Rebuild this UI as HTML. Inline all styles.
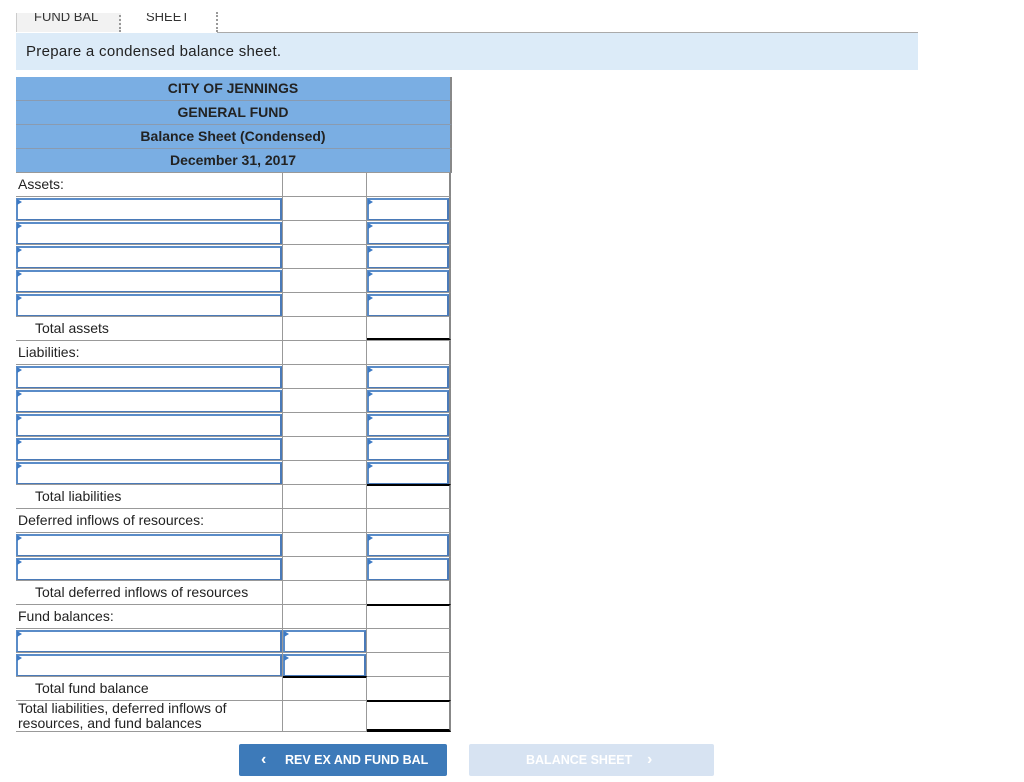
<html><head><style>
body{margin:0;width:1024px;height:782px;background:#fff;font-family:"Liberation Sans",Arial,sans-serif;position:relative;overflow:hidden}
.a{position:absolute}
.hd{position:absolute;left:16px;width:434px;height:23px;background:#7aaee3;border-bottom:1px solid #8a9bb0;font-weight:bold;font-size:14px;color:#222;text-align:center;line-height:23px;border-right:2px solid #888}
.r{position:absolute;left:16px;width:435px;height:24px;display:flex;font-size:14px;color:#222}
.r>div{box-sizing:border-box;height:24px;border-top:1px solid #999;border-right:1px solid #999;position:relative}
.r>div:nth-child(1){width:267px;border-right:1px solid #999}
.r>div:nth-child(2){width:84px}
.r>div:nth-child(3){width:84px;border-right:2px solid #888}
.l{padding:3px 0 0 2px;white-space:nowrap}
.t{padding:3px 0 0 19px}
.i::after{content:"";position:absolute;left:0;top:1px;right:0;bottom:-1px;border:2px solid #5286c4;border-color:#5a8cc8 #4a7ab8 #4a7ab8 #5a8cc8}
.i::before{content:"";position:absolute;left:1px;top:2px;border-left:5px solid #3d7ac4;border-top:3px solid transparent;border-bottom:3px solid transparent;z-index:2}
.bb{border-bottom:2px solid #000!important}
.bt{border-top:2px solid #000!important}
</style></head><body>
<div class="a" style="left:16px;top:0;width:102px;height:32px;background:#f2f2f2;border-right:2px dotted #999;border-left:1px solid #ccc"></div>
<div class="a" style="left:34px;top:9px;font-size:13px;color:#333">FUND BAL</div>
<div class="a" style="left:146px;top:9px;font-size:13px;color:#333">SHEET</div>
<div class="a" style="left:0;top:0;width:300px;height:13px;background:#fff"></div>
<div class="a" style="left:216px;top:12px;height:20px;border-left:2px dotted #999"></div>
<div class="a" style="left:217px;top:32px;width:701px;border-top:1px solid #aaa"></div>
<div class="a" style="left:16px;top:33px;width:902px;height:37px;background:#dcebf8;font-size:15px;letter-spacing:0.3px;color:#222;line-height:37px;text-indent:10px">Prepare a condensed balance sheet.</div>
<div class="hd" style="top:77px">CITY OF JENNINGS</div>
<div class="hd" style="top:101px">GENERAL FUND</div>
<div class="hd" style="top:125px">Balance Sheet (Condensed)</div>
<div class="hd" style="top:149px">December 31, 2017</div>

<div class="r" style="top:172px"><div class="l">Assets:</div><div></div><div></div></div>
<div class="r" style="top:196px"><div class="i"></div><div></div><div class="i"></div></div>
<div class="r" style="top:220px"><div class="i"></div><div></div><div class="i"></div></div>
<div class="r" style="top:244px"><div class="i"></div><div></div><div class="i"></div></div>
<div class="r" style="top:268px"><div class="i"></div><div></div><div class="i"></div></div>
<div class="r" style="top:292px"><div class="i"></div><div></div><div class="i"></div></div>
<div class="r" style="top:316px"><div class="t">Total assets</div><div></div><div class="bb"></div></div>
<div class="r" style="top:340px"><div class="l">Liabilities:</div><div></div><div></div></div>
<div class="r" style="top:364px"><div class="i"></div><div></div><div class="i"></div></div>
<div class="r" style="top:388px"><div class="i"></div><div></div><div class="i"></div></div>
<div class="r" style="top:412px"><div class="i"></div><div></div><div class="i"></div></div>
<div class="r" style="top:436px"><div class="i"></div><div></div><div class="i"></div></div>
<div class="r" style="top:460px"><div class="i"></div><div></div><div class="i"></div></div>
<div class="r" style="top:484px"><div class="t">Total liabilities</div><div></div><div class="bt"></div></div>
<div class="r" style="top:508px"><div class="l">Deferred inflows of resources:</div><div></div><div></div></div>
<div class="r" style="top:532px"><div class="i"></div><div></div><div class="i"></div></div>
<div class="r" style="top:556px"><div class="i"></div><div></div><div class="i"></div></div>
<div class="r" style="top:580px"><div class="t">Total deferred inflows of resources</div><div></div><div></div></div>
<div class="r" style="top:604px"><div class="l">Fund balances:</div><div></div><div class="bt"></div></div>
<div class="r" style="top:628px"><div class="i"></div><div class="i"></div><div></div></div>
<div class="r" style="top:652px"><div class="i"></div><div class="i"></div><div></div></div>
<div class="r" style="top:676px"><div class="t">Total fund balance</div><div class="bt"></div><div></div></div>
<div class="r" style="top:700px;height:32px"><div class="l" style="height:32px;line-height:15px;padding-top:0;border-bottom:1px solid #999">Total liabilities, deferred inflows of<br>resources, and fund balances</div><div style="height:32px;border-bottom:1px solid #999"></div><div class="bt" style="height:32px;border-bottom:3px solid #000"></div></div>

<div class="a" style="left:239px;top:744px;width:208px;height:32px;background:#3d7ab9;border-radius:2px;color:#fff;font-weight:bold;font-size:12.5px;line-height:32px"><span style="position:absolute;left:22px;font-size:16px">&#8249;</span><span style="position:absolute;left:46px">REV EX AND FUND BAL</span></div>
<div class="a" style="left:469px;top:744px;width:245px;height:32px;background:#d7e3f2;border-radius:2px;color:#fff;font-weight:bold;font-size:12.5px;line-height:32px"><span style="position:absolute;left:57px">BALANCE SHEET</span><span style="position:absolute;left:178px;font-size:16px">&#8250;</span></div>
</body></html>
